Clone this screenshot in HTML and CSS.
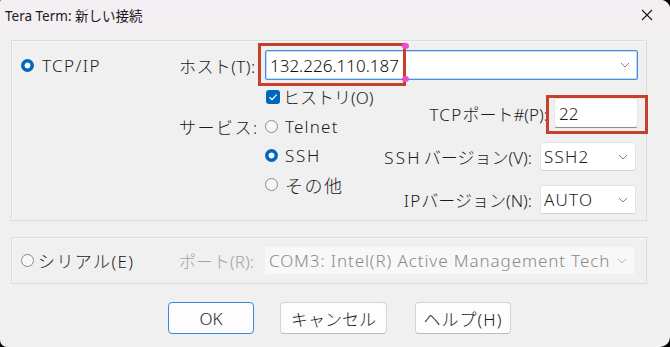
FILE: index.html
```html
<!DOCTYPE html>
<html lang="ja">
<head>
<meta charset="utf-8">
<title>Tera Term: 新しい接続</title>
<link rel="stylesheet" href="styles.css">
</head>
<body>
<div class="window">
  <div class="titlebar">
    <span class="title">Tera Term: 新しい接続</span>
    <span class="close"><svg width="12" height="12" viewBox="0 0 12 12"><path d="M1 1L11 11M11 1L1 11" stroke="#1a1a1a" stroke-width="1.1" fill="none"/></svg></span>
  </div>
  <div class="content">
    <div class="group group-tcp">
      <div class="proto">
        <span class="radio on"></span><span class="proto-label">TCP/IP</span>
      </div>
      <div class="tcp-main">
        <div class="host-row">
          <span class="label host-label">ホスト(T):</span>
          <div class="combo host-combo">
            <span class="val">132.226.110.187</span>
            <svg class="chev" width="10" height="6" viewBox="0 0 10 6"><path d="M1 1L5 5L9 1" stroke="#808080" stroke-width="1" fill="none"/></svg>
            <span class="mark host-mark"></span>
            <span class="handle h-top"></span>
            <span class="handle h-bot"></span>
          </div>
        </div>
        <div class="lower">
          <div class="svc">
            <div class="check-row">
              <span class="checkbox"><svg width="14" height="14" viewBox="0 0 14 14"><path d="M3.5 7.2L6 9.6L10.6 4.6" stroke="#fff" stroke-width="1.3" fill="none"/></svg></span>
              <span>ヒストリ(O)</span>
            </div>
            <div class="svc-body">
              <span class="label svc-label">サービス:</span>
              <div class="radios">
                <div class="opt"><span class="radio"></span><span class="lat">Telnet</span></div>
                <div class="opt"><span class="radio on"></span><span class="lat ssh">SSH</span></div>
                <div class="opt"><span class="radio"></span><span class="other">その他</span></div>
              </div>
            </div>
          </div>
          <div class="params">
            <div class="param port-row">
              <span class="plabel"><span class="lat">TCP</span>ポート#(P):</span>
              <div class="port-input">22<span class="mark port-mark"></span></div>
            </div>
            <div class="param sel-row">
              <span class="plabel"><span class="lat ssh-l">SSH</span>バージョン(V):</span>
              <div class="select"><span class="lat">SSH2</span><svg class="chev" width="10" height="6" viewBox="0 0 10 6"><path d="M1 1L5 5L9 1" stroke="#808080" stroke-width="1" fill="none"/></svg></div>
            </div>
            <div class="param sel-row">
              <span class="plabel"><span class="lat">IP</span>バージョン(N):</span>
              <div class="select"><span class="lat">AUTO</span><svg class="chev" width="10" height="6" viewBox="0 0 10 6"><path d="M1 1L5 5L9 1" stroke="#808080" stroke-width="1" fill="none"/></svg></div>
            </div>
          </div>
        </div>
      </div>
    </div>
    <div class="group group-serial">
      <div class="proto">
        <span class="radio"></span><span class="serial-label">シリアル(E)</span>
      </div>
      <span class="label disabled">ポート(R):</span>
      <div class="combo serial-combo">
        <span class="val">COM3: Intel(R) Active Management Tech</span>
        <svg class="chev" width="10" height="6" viewBox="0 0 10 6"><path d="M1 1L5 5L9 1" stroke="#b8b8b8" stroke-width="1" fill="none"/></svg>
      </div>
    </div>
    <div class="buttons">
      <button class="btn btn-ok">OK</button>
      <button class="btn btn-cancel">キャンセル</button>
      <button class="btn btn-help">ヘルプ(H)</button>
    </div>
  </div>
</div>
</body>
</html>
```

FILE: styles.css
```css
* { box-sizing: border-box; }
html, body { margin: 0; padding: 0; }
body {
  width: 670px;
  height: 347px;
  overflow: hidden;
  background: #000;
  font-family: "Noto Sans", "Noto Sans CJK JP", sans-serif;
  font-size: 17px;
  font-weight: 300;
  color: #1b1b1b;
}
.window {
  width: 670px;
  height: 347px;
  background: #f0f0f0;
  border-radius: 2px 9px 10px 7px;
  display: flex;
  flex-direction: column;
  overflow: hidden;
}
.titlebar {
  height: 30px;
  flex-shrink: 0;
  background: #f3eff3;
  display: flex;
  align-items: center;
  padding-left: 5px;
  font-size: 13.5px;
  font-weight: 400;
  color: #1a1a1a;
}
.close {
  margin-left: auto;
  margin-right: 17px;
  display: flex;
  align-items: center;
}
.content {
  padding: 10px 0 0 11px;
}
.group {
  width: 636px;
  border: 1px solid #dcdcdc;
  box-shadow: inset 1px 1px 0 #f8f8f8;
  display: flex;
}
.group-tcp { height: 181px; }
.group-serial {
  height: 47px;
  margin-top: 16px;
  align-items: center;
}
.proto {
  width: 167px;
  flex-shrink: 0;
  display: flex;
  align-items: center;
  padding-left: 9px;
  height: 30px;
}
.group-tcp .proto { margin-top: 9px; }
.proto-label { margin-left: 8px; letter-spacing: 1.4px; }
.serial-label { margin-left: 4px; letter-spacing: 1.4px; }
.lat { letter-spacing: 1.2px; }
.ssh { letter-spacing: 1.7px; }
.ssh-l { letter-spacing: 2.2px; margin-right: 2px; }
.other { letter-spacing: 1.5px; font-size: 18px; }

.radio {
  width: 13px;
  height: 13px;
  border-radius: 50%;
  border: 1px solid #8a8a8a;
  background: #f7f7f7;
  flex-shrink: 0;
}
.radio.on {
  border: none;
  background: radial-gradient(circle, #fff 0 2.6px, #0067c0 3.3px);
}

.tcp-main {
  flex: 1;
  display: flex;
  flex-direction: column;
  padding-top: 9px;
  padding-right: 8px;
}
.host-row {
  display: flex;
  align-items: center;
  height: 30px;
}
.label {
  width: 86px;
  flex-shrink: 0;
}
.host-label { letter-spacing: 0.4px; }
.label.disabled { color: #a3a3a3; }

.combo {
  position: relative;
  display: flex;
  align-items: center;
  padding-left: 4px;
}
.chev { margin-left: auto; margin-right: 7px; flex-shrink: 0; }
.host-combo {
  flex: 1;
  height: 30px;
  background: #fff;
  border: 1px solid #3f8fde;
  box-shadow: inset 0 0 0 0.6px rgba(63,143,222,0.6);
  border-radius: 2px;
}
.host-combo .val { color: #111; }
.mark {
  position: absolute;
  border: 3px solid #c6402c;
  pointer-events: none;
}
.host-mark {
  left: -8px;
  top: -8px;
  width: 148px;
  height: 43px;
}
.handle {
  position: absolute;
  width: 7px;
  height: 6px;
  border-radius: 50%;
  background: #f04ccf;
  left: 136px;
}
.h-top { top: -8px; }
.h-bot { top: 25px; }

.lower {
  display: flex;
}
.check-row {
  display: flex;
  align-items: center;
  margin: 8px 0 0 87px;
  height: 17px;
  gap: 3px;
}
.checkbox {
  width: 14px;
  height: 14px;
  border-radius: 3px;
  background: #0067c0;
  display: flex;
}
.svc-body {
  display: flex;
  margin-top: 7px;
}
.svc-label {
  height: 29px;
  display: flex;
  align-items: center;
  letter-spacing: 1.5px;
}
.radios { display: flex; flex-direction: column; }
.opt {
  height: 29px;
  display: flex;
  align-items: center;
  gap: 7px;
}

.params {
  margin-left: auto;
  display: flex;
  flex-direction: column;
  align-items: flex-end;
}
.param {
  display: flex;
  align-items: center;
}
.port-row { margin-top: 18px; gap: 6px; }
.port-input {
  position: relative;
  width: 84px;
  height: 30px;
  background: #fff;
  border: 1px solid #e6e6e6;
  border-bottom: 1px solid #8c8c8c;
  border-radius: 3px;
  display: flex;
  align-items: center;
  padding-left: 4px;
}
.port-mark {
  left: -9px;
  top: -4px;
  width: 102px;
  height: 39px;
}
.sel-row { margin-top: 14px; gap: 8px; margin-right: 2px; }
.select {
  width: 96px;
  height: 29px;
  background: #fff;
  border: 1px solid #e3e3e3;
  border-bottom-color: #d2d2d2;
  border-radius: 3px;
  display: flex;
  align-items: center;
  padding-left: 3px;
}

.serial-combo {
  width: 369px;
  height: 27px;
  background: #f8f8f8;
  color: #8a8a8a;
  letter-spacing: 0.9px;
}

.buttons {
  display: flex;
  margin: 18px 0 0 157px;
}
.btn {
  font-family: "Noto Sans", "Noto Sans CJK JP", sans-serif;
  font-size: 17px;
  font-weight: 300;
  color: #1b1b1b;
  height: 32px;
  background: #fdfdfd;
  border: 1px solid #d3d3d3;
  border-bottom-color: #bdbdbd;
  border-radius: 4px;
  padding: 0;
  display: flex;
  align-items: center;
  justify-content: center;
}
.btn-ok { width: 86px; border: 1px solid #3a88da; }
.btn-cancel { width: 107px; margin-left: 26px; }
.btn-help { width: 96px; margin-left: 28px; letter-spacing: 1px; }
```
